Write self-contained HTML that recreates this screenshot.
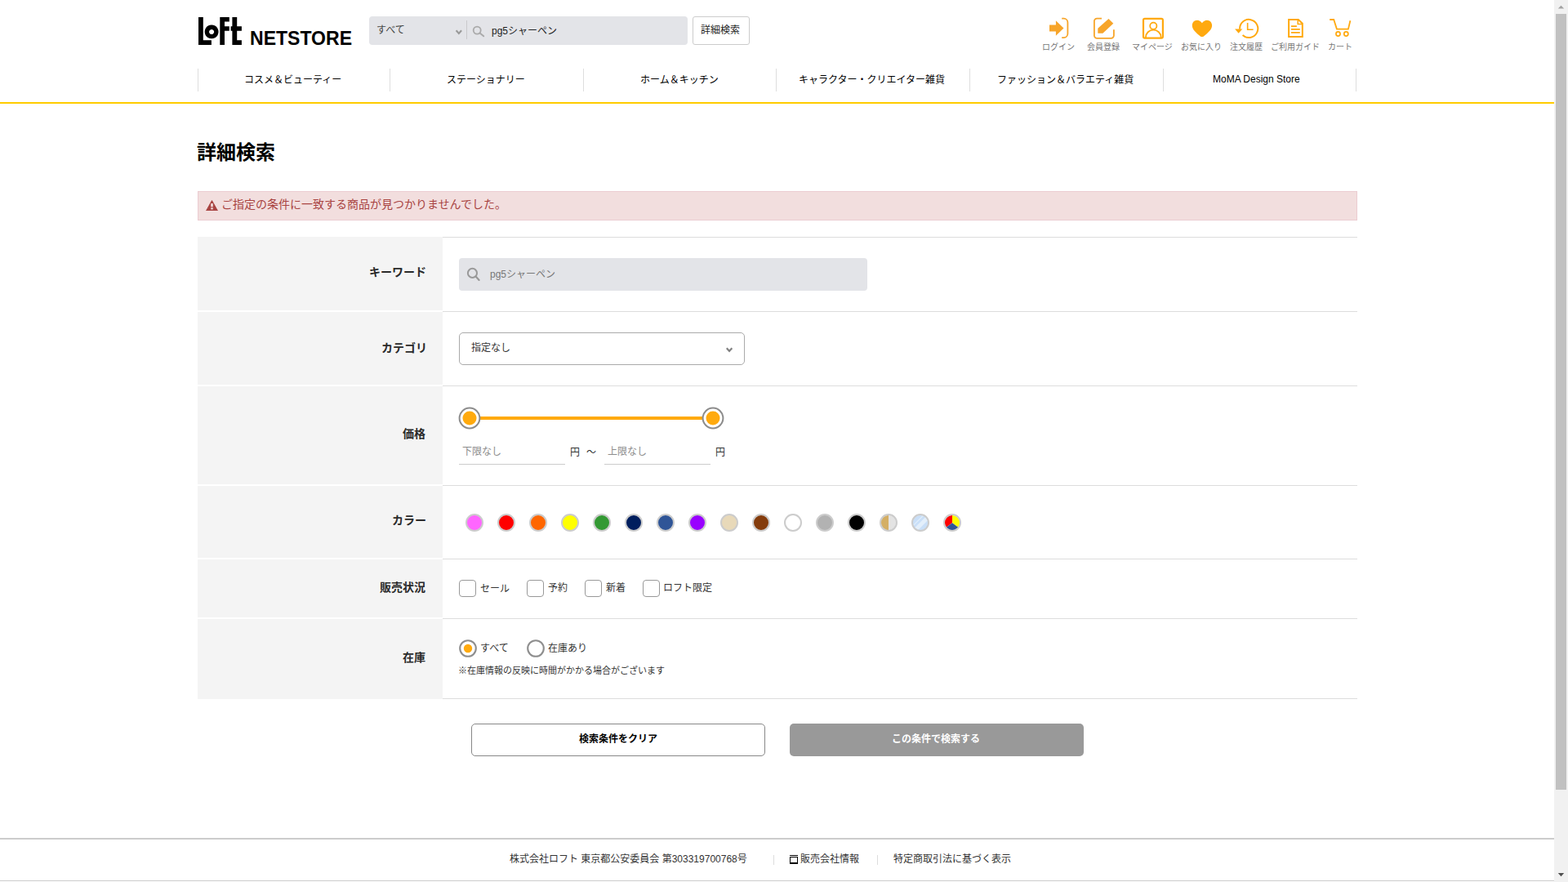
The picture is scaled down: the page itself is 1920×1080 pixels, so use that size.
<!DOCTYPE html>
<html lang="ja">
<head>
<meta charset="utf-8">
<title>詳細検索 | ロフト公式通販 LOFT NETSTORE</title>
<meta name="viewport" content="width=1920">
<style>
html,body{margin:0;padding:0;background:#fff}
body{width:1920px;height:1080px;overflow:hidden;position:relative;font-family:"Liberation Sans","Noto Sans CJK JP",sans-serif;font-size:12px;color:#333}
#page div,#page a,#page .t,#page svg.a,#page input,#page select,#page header,#page nav,#page main,#page footer,#page h1,#page p,#page label,#page button,#page i,#page ul,#page li,#page form,#page section{position:absolute;display:block;box-sizing:border-box;margin:0;padding:0}
#page{position:absolute;left:0;top:0;width:1920px;height:1080px;overflow:hidden}
.t{overflow:hidden;white-space:nowrap;line-height:1;text-decoration:none}
.t .x{position:absolute;left:1px;top:2px;color:inherit;white-space:nowrap;line-height:1.2;letter-spacing:0;font-family:"Liberation Sans","Noto Sans CJK JP",sans-serif}
a{text-decoration:none;color:inherit}
button{border:0;background:none;font:inherit}
</style>
</head>
<body>
<div id="page">
<header style="left:0px;top:0px;width:1903px;height:127px;">
<a style="left:236px;top:14px;width:204px;height:50px" aria-label="LoFt NETSTORE"><svg class="a" style="left:0;top:0" width="204" height="50" viewBox="236 14 204 50" fill="#000"><path d="M243 21H248.8V49.2H258.9V54.9H243Z"/><path fill-rule="evenodd" d="M259.1 30.45a8.45 8.45 0 1 0 0.001 0ZM259.1 35.9a3 3 0 1 1 -0.001 0Z"/><path d="M269.3 21H280.8V26.5H275V32.2H280.8V37.7H275V54.9H269.3Z"/><path d="M284.4 21H290.2V32.2H295.9V37.7H290.2V49.2H295.9V54.9H284.4V37.7H282.6V32.2H284.4Z"/><text x="306" y="54.85" font-size="23" font-weight="bold" fill="#000" textLength="125" lengthAdjust="spacingAndGlyphs" style="font-family:'Liberation Sans',sans-serif">NETSTORE</text></svg></a>
<form role="search" style="left:452px;top:20px;width:466px;height:35px;">
<div style="left:0px;top:0px;width:390px;height:35px;background:#e3e4e8;border-radius:4px"></div>
<div style="left:119px;top:5px;width:1px;height:23px;background:#c9c9cc"></div>
<span class="t" style="left:8px;top:8px;width:40px;height:17px;font-size:12px;color:#444"><span class="x">すべて</span></span>
<svg class="a" style="left:104px;top:14px" width="12" height="10" viewBox="0 0 12 10" ><path d="M2.6 3.3 L5.85 6.9 L9.1 3.3" fill="none" stroke="#999" stroke-width="2.1"/></svg>
<svg class="a" style="left:125px;top:10px" width="18" height="17" viewBox="0 0 18 17" ><circle cx="7.2" cy="7.1" r="4.5" fill="none" stroke="#aaa" stroke-width="1.8"/><path d="M10.6 10.5 L15.2 14.3" stroke="#aaa" stroke-width="2" stroke-linecap="round"/></svg>
<span class="t" style="left:149px;top:9px;width:86px;height:17px;font-size:12px;color:#222"><span class="x">pg5シャーペン</span></span>
<a style="left:396px;top:0px;width:70px;height:35px;background:#fff;border:1px solid #ccc;border-radius:3px"></a>
<a class="t" style="left:405px;top:8px;width:52px;height:17px;font-size:12px;color:#222"><span class="x">詳細検索</span></a>
</form>
<div role="navigation" aria-label="user menu" style="left:1270px;top:16px;width:400px;height:52px;">
<svg class="a" style="left:0;top:0" width="400" height="36" viewBox="1270 16 400 36"><path d="M1285 30.5H1292.9V25.3L1302.5 34.45L1292.9 43.7V38.4H1285Z" fill="#f7a52a"/><path d="M1300.2 22.65H1302.6a4.8 4.8 0 0 1 4.8 4.8V41.3a4.8 4.8 0 0 1 -4.8 4.8H1300.2" fill="none" stroke="#f7a52a" stroke-width="1.8"/><path d="M1349 22.65H1343.2a3.3 3.3 0 0 0 -3.3 3.3V43.55a3.3 3.3 0 0 0 3.3 3.3H1360.6a3.3 3.3 0 0 0 3.3 -3.3V36.2" fill="none" stroke="#f7a52a" stroke-width="1.8"/><path d="M1344.3 40.7V34.7L1357.5 23L1363.3 28.7L1350.4 40.7Z" fill="#f7a52a"/><rect x="1400" y="22.9" width="23.9" height="23.7" rx="1.8" fill="none" stroke="#ffa90f" stroke-width="2.2"/><circle cx="1412.3" cy="31.75" r="4.1" fill="none" stroke="#ffa90f" stroke-width="1.8"/><path d="M1403 46.2V45.6a9.3 9 0 0 1 18.6 0V46.2" fill="none" stroke="#ffa90f" stroke-width="1.8"/><path d="M1471.9 28.2C1470.3 26.2 1468.3 24.8 1465.9 24.8C1462.4 24.8 1459.8 27.6 1459.8 31.2C1459.8 36.2 1464.6 40 1469.6 44.2C1470.9 45.4 1472.9 45.4 1474.2 44.2C1479.2 40 1484.1 36.2 1484.1 31.2C1484.1 27.6 1481.4 24.8 1478 24.8C1475.6 24.8 1473.5 26.2 1471.9 28.2Z" fill="#ffa90f"/><path d="M1518.1 35.6A11.1 11.1 0 1 1 1521.6 43.1" fill="none" stroke="#ffa90f" stroke-width="2"/><path d="M1512.1 35.4H1521.3L1516.6 40.8Z" fill="#ffa90f"/><path d="M1527.65 28V36.2H1534.6" fill="none" stroke="#ffa90f" stroke-width="1.6"/><path d="M1578.1 24H1589.8L1594.8 28.8V44.9H1578.1Z" fill="none" stroke="#ffa90f" stroke-width="2" stroke-linejoin="miter"/><path d="M1589.2 24V29.4H1594.8" fill="none" stroke="#ffa90f" stroke-width="1.5"/><path d="M1581 32.1H1587.9M1581 35.9H1591.8M1581 39.9H1591.8" stroke="#ffa90f" stroke-width="1.8"/><path d="M1628.2 24H1633.2L1636.9 35.6H1650.9L1653.4 25.2" fill="none" stroke="#ffa90f" stroke-width="1.8" stroke-linejoin="miter"/><circle cx="1638.5" cy="41.5" r="2.55" fill="none" stroke="#ffa90f" stroke-width="1.7"/><circle cx="1648.3" cy="41.5" r="2.55" fill="none" stroke="#ffa90f" stroke-width="1.7"/></svg>
<a class="t" style="left:5px;top:34px;width:44px;height:15px;font-size:10px;color:#777"><span class="x">ログイン</span></a>
<a class="t" style="left:60px;top:34px;width:44px;height:15px;font-size:10px;color:#777"><span class="x">会員登録</span></a>
<a class="t" style="left:115px;top:34px;width:54px;height:15px;font-size:10px;color:#777"><span class="x">マイページ</span></a>
<a class="t" style="left:175px;top:34px;width:54px;height:15px;font-size:10px;color:#777"><span class="x">お気に入り</span></a>
<a class="t" style="left:235px;top:34px;width:44px;height:15px;font-size:10px;color:#777"><span class="x">注文履歴</span></a>
<a class="t" style="left:285px;top:34px;width:64px;height:15px;font-size:10px;color:#777"><span class="x">ご利用ガイド</span></a>
<a class="t" style="left:355px;top:34px;width:34px;height:15px;font-size:10px;color:#777"><span class="x">カート</span></a>
</div>
<nav style="left:0px;top:84px;width:1903px;height:43px;">
<div style="left:242px;top:0px;width:1px;height:28px;background:#dedede"></div>
<div style="left:477px;top:0px;width:1px;height:28px;background:#dedede"></div>
<div style="left:714px;top:0px;width:1px;height:28px;background:#dedede"></div>
<div style="left:950px;top:0px;width:1px;height:28px;background:#dedede"></div>
<div style="left:1187px;top:0px;width:1px;height:28px;background:#dedede"></div>
<div style="left:1424px;top:0px;width:1px;height:28px;background:#dedede"></div>
<div style="left:1660px;top:0px;width:1px;height:28px;background:#dedede"></div>
<a class="t" style="left:298px;top:5px;width:124px;height:17px;font-size:12px;color:#000"><span class="x">コスメ＆ビューティー</span></a>
<a class="t" style="left:546px;top:5px;width:100px;height:17px;font-size:12px;color:#000"><span class="x">ステーショナリー</span></a>
<a class="t" style="left:783px;top:5px;width:100px;height:17px;font-size:12px;color:#000"><span class="x">ホーム＆キッチン</span></a>
<a class="t" style="left:977px;top:5px;width:184px;height:17px;font-size:12px;color:#000"><span class="x">キャラクター・クリエイター雑貨</span></a>
<a class="t" style="left:1220px;top:5px;width:172px;height:17px;font-size:12px;color:#000"><span class="x">ファッション＆バラエティ雑貨</span></a>
<a class="t" style="left:1484px;top:4px;width:118px;height:17px;font-size:12px;color:#000"><span class="x">MoMA Design Store</span></a>
<div style="left:0px;top:41px;width:1903px;height:2px;background:#fc0"></div>
</nav>
</header>
<main style="left:0px;top:127px;width:1903px;height:899px;">
<h1 class="t" style="left:240px;top:44px;width:100px;height:34px;font-size:24px;font-weight:bold;color:#000"><span class="x">詳細検索</span></h1>
<div role="alert" style="left:242px;top:107px;width:1420px;height:36px;background:#f2dede;border:1px solid #ebccd1">
<svg class="a" style="left:9px;top:9.6px" width="15" height="13.5" viewBox="0 0 15 13.5" ><path d="M7.5 0.6 L14.4 12.9 H0.6 Z" fill="#a94442" stroke="#a94442" stroke-width="1" stroke-linejoin="round"/><rect x="6.2" y="4.1" width="2.6" height="4.2" fill="#f2dede"/><rect x="6.2" y="9.4" width="2.6" height="2" fill="#f2dede"/></svg>
<p class="t" style="left:27px;top:5px;width:354px;height:20px;font-size:14px;color:#a94442"><span class="x">ご指定の条件に一致する商品が見つかりませんでした。</span></p>
</div>
<form style="left:242px;top:163px;width:1420px;height:566px;">
<div style="left:0px;top:0px;width:300px;height:90px;background:#f4f4f4"></div>
<label class="t" style="left:209px;top:33px;width:74px;height:20px;font-size:14px;font-weight:bold;color:#2a2a2a"><span class="x">キーワード</span></label>
<div style="left:300px;top:0px;width:1120px;height:1px;background:#ddd"></div>
<div style="left:320px;top:26px;width:500px;height:40px;background:#e3e4e8;border-radius:4px"></div>
<svg class="a" style="left:329px;top:37px" width="18" height="18" viewBox="0 0 18 18" ><circle cx="7.45" cy="7.4" r="5.55" fill="none" stroke="#999" stroke-width="2"/><path d="M11.6 11.5 L15.6 15.9" stroke="#999" stroke-width="2.2" stroke-linecap="round"/></svg>
<span class="t" style="left:357px;top:37px;width:86px;height:17px;font-size:12px;color:#777"><span class="x">pg5シャーペン</span></span>
<div style="left:0px;top:92px;width:300px;height:89px;background:#f4f4f4"></div>
<label class="t" style="left:224px;top:126px;width:60px;height:20px;font-size:14px;font-weight:bold;color:#2a2a2a"><span class="x">カテゴリ</span></label>
<div style="left:300px;top:91px;width:1120px;height:1px;background:#ddd"></div>
<div style="left:320px;top:117px;width:350px;height:40px;background:#fff;border:1px solid #aaa;border-radius:5px"></div>
<span class="t" style="left:334px;top:127px;width:52px;height:17px;font-size:12px;color:#333"><span class="x">指定なし</span></span>
<svg class="a" style="left:646px;top:133px" width="10" height="10" viewBox="0 0 10 10" ><path d="M1.8 3.2 L5.05 6.9 L8.3 3.2" fill="none" stroke="#808080" stroke-width="2.2"/></svg>
<div style="left:0px;top:183px;width:300px;height:120px;background:#f4f4f4"></div>
<label class="t" style="left:250px;top:231px;width:32px;height:20px;font-size:14px;font-weight:bold;color:#2a2a2a"><span class="x">価格</span></label>
<div style="left:300px;top:182px;width:1120px;height:1px;background:#ddd"></div>
<div style="left:333px;top:220px;width:298px;height:4px;background:#ffaa0e"></div>
<svg class="a" style="left:319.4px;top:207.5px" width="28" height="28" viewBox="0 0 28 28" ><circle cx="14" cy="14" r="12.4" fill="#fff" stroke="#8c8c8c" stroke-width="2"/><circle cx="14" cy="14" r="8.5" fill="#ffaa0e"/></svg>
<svg class="a" style="left:617.4px;top:207.5px" width="28" height="28" viewBox="0 0 28 28" ><circle cx="14" cy="14" r="12.4" fill="#fff" stroke="#8c8c8c" stroke-width="2"/><circle cx="14" cy="14" r="8.5" fill="#ffaa0e"/></svg>
<div style="left:320px;top:278px;width:130px;height:1px;background:#ccc"></div>
<div style="left:498px;top:278px;width:130px;height:1px;background:#ccc"></div>
<span class="t" style="left:323px;top:254px;width:52px;height:17px;font-size:12px;color:#8c8c8c"><span class="x">下限なし</span></span>
<span class="t" style="left:455px;top:255px;width:16px;height:17px;font-size:12px;color:#333"><span class="x">円</span></span>
<span class="t" style="left:475px;top:255px;width:16px;height:17px;font-size:12px;color:#333"><span class="x">～</span></span>
<span class="t" style="left:501px;top:254px;width:52px;height:17px;font-size:12px;color:#8c8c8c"><span class="x">上限なし</span></span>
<span class="t" style="left:633px;top:255px;width:16px;height:17px;font-size:12px;color:#333"><span class="x">円</span></span>
<div style="left:0px;top:305px;width:300px;height:88px;background:#f4f4f4"></div>
<label class="t" style="left:237px;top:337px;width:46px;height:20px;font-size:14px;font-weight:bold;color:#2a2a2a"><span class="x">カラー</span></label>
<div style="left:300px;top:304px;width:1120px;height:1px;background:#ddd"></div>
<svg class="a" style="left:328px;top:339px" width="22" height="22" viewBox="0 0 22 22" ><circle cx="11" cy="11" r="10" fill="#ff66ff" stroke="#ccc" stroke-width="2"/></svg>
<svg class="a" style="left:367px;top:339px" width="22" height="22" viewBox="0 0 22 22" ><circle cx="11" cy="11" r="10" fill="#ff0000" stroke="#ccc" stroke-width="2"/></svg>
<svg class="a" style="left:406px;top:339px" width="22" height="22" viewBox="0 0 22 22" ><circle cx="11" cy="11" r="10" fill="#ff6600" stroke="#ccc" stroke-width="2"/></svg>
<svg class="a" style="left:445px;top:339px" width="22" height="22" viewBox="0 0 22 22" ><circle cx="11" cy="11" r="10" fill="#ffff00" stroke="#ccc" stroke-width="2"/></svg>
<svg class="a" style="left:484px;top:339px" width="22" height="22" viewBox="0 0 22 22" ><circle cx="11" cy="11" r="10" fill="#339933" stroke="#ccc" stroke-width="2"/></svg>
<svg class="a" style="left:523px;top:339px" width="22" height="22" viewBox="0 0 22 22" ><circle cx="11" cy="11" r="10" fill="#001e5e" stroke="#ccc" stroke-width="2"/></svg>
<svg class="a" style="left:562px;top:339px" width="22" height="22" viewBox="0 0 22 22" ><circle cx="11" cy="11" r="10" fill="#2f5597" stroke="#ccc" stroke-width="2"/></svg>
<svg class="a" style="left:601px;top:339px" width="22" height="22" viewBox="0 0 22 22" ><circle cx="11" cy="11" r="10" fill="#9900ff" stroke="#ccc" stroke-width="2"/></svg>
<svg class="a" style="left:640px;top:339px" width="22" height="22" viewBox="0 0 22 22" ><circle cx="11" cy="11" r="10" fill="#e8d9b9" stroke="#ccc" stroke-width="2"/></svg>
<svg class="a" style="left:679px;top:339px" width="22" height="22" viewBox="0 0 22 22" ><circle cx="11" cy="11" r="10" fill="#843c0c" stroke="#ccc" stroke-width="2"/></svg>
<svg class="a" style="left:718px;top:339px" width="22" height="22" viewBox="0 0 22 22" ><circle cx="11" cy="11" r="10" fill="#ffffff" stroke="#ccc" stroke-width="2"/></svg>
<svg class="a" style="left:757px;top:339px" width="22" height="22" viewBox="0 0 22 22" ><circle cx="11" cy="11" r="10" fill="#b2b2b2" stroke="#ccc" stroke-width="2"/></svg>
<svg class="a" style="left:796px;top:339px" width="22" height="22" viewBox="0 0 22 22" ><circle cx="11" cy="11" r="10" fill="#000000" stroke="#ccc" stroke-width="2"/></svg>
<svg class="a" style="left:835px;top:339px" width="22" height="22" viewBox="0 0 22 22" ><clipPath id="cg"><circle cx="11" cy="11" r="9.3"/></clipPath><g clip-path="url(#cg)"><rect x="0" y="0" width="11" height="22" fill="#d4af65"/><rect x="11" y="0" width="11" height="22" fill="#e3e3e3"/></g><circle cx="11" cy="11" r="10" fill="none" stroke="#ccc" stroke-width="2"/></svg>
<svg class="a" style="left:874px;top:339px" width="22" height="22" viewBox="0 0 22 22" ><clipPath id="cc"><circle cx="11" cy="11" r="9.3"/></clipPath><g clip-path="url(#cc)"><rect width="22" height="22" fill="#c9dff8"/><path d="M-2.6 27.4 L27.4 -2.6" stroke="#e3effb" stroke-width="4.9"/><path d="M-6.65 23.35 L23.35 -6.65" stroke="#e3effb" stroke-width="1.1"/></g><circle cx="11" cy="11" r="10" fill="none" stroke="#ccc" stroke-width="2"/></svg>
<svg class="a" style="left:913px;top:339px" width="22" height="22" viewBox="0 0 22 22" ><clipPath id="cm"><circle cx="11" cy="11" r="9.3"/></clipPath><g clip-path="url(#cm)"><path d="M11 11.2 L11 -2 L-2 -2 L-2 21 Z" fill="#f00"/><path d="M11 11.2 L11 -2 L24 -2 L24 21 Z" fill="#ff0"/><path d="M11 11.2 L-2 21 L-2 24 L24 24 L24 21 Z" fill="#2f5597"/></g><circle cx="11" cy="11" r="10" fill="none" stroke="#ccc" stroke-width="2"/></svg>
<div style="left:0px;top:395px;width:300px;height:71px;background:#f4f4f4"></div>
<label class="t" style="left:222px;top:419px;width:60px;height:20px;font-size:14px;font-weight:bold;color:#2a2a2a"><span class="x">販売状況</span></label>
<div style="left:300px;top:394px;width:1120px;height:1px;background:#ddd"></div>
<div style="left:320px;top:420px;width:21px;height:21px;background:#fff;border:1px solid #999;border-radius:4px"></div>
<label class="t" style="left:345px;top:422px;width:40px;height:17px;font-size:12px;color:#333"><span class="x">セール</span></label>
<div style="left:403px;top:420px;width:21px;height:21px;background:#fff;border:1px solid #999;border-radius:4px"></div>
<label class="t" style="left:428px;top:421px;width:28px;height:17px;font-size:12px;color:#333"><span class="x">予約</span></label>
<div style="left:474px;top:420px;width:21px;height:21px;background:#fff;border:1px solid #999;border-radius:4px"></div>
<label class="t" style="left:499px;top:421px;width:28px;height:17px;font-size:12px;color:#333"><span class="x">新着</span></label>
<div style="left:545px;top:420px;width:21px;height:21px;background:#fff;border:1px solid #999;border-radius:4px"></div>
<label class="t" style="left:569px;top:421px;width:64px;height:17px;font-size:12px;color:#333"><span class="x">ロフト限定</span></label>
<div style="left:0px;top:468px;width:300px;height:97.5px;background:#f4f4f4"></div>
<label class="t" style="left:250px;top:505px;width:32px;height:20px;font-size:14px;font-weight:bold;color:#2a2a2a"><span class="x">在庫</span></label>
<div style="left:300px;top:467px;width:1120px;height:1px;background:#ddd"></div>
<svg class="a" style="left:319px;top:492px" width="24" height="24" viewBox="0 0 24 24" ><circle cx="12" cy="12" r="9.8" fill="#fff" stroke="#8e8e8e" stroke-width="2.1"/><circle cx="12" cy="12" r="5.2" fill="#ffaa0e"/></svg>
<svg class="a" style="left:402px;top:492px" width="24" height="24" viewBox="0 0 24 24" ><circle cx="12" cy="12" r="9.8" fill="#fff" stroke="#8e8e8e" stroke-width="2.1"/></svg>
<label class="t" style="left:345px;top:495px;width:40px;height:17px;font-size:12px;color:#333"><span class="x">すべて</span></label>
<label class="t" style="left:428px;top:495px;width:52px;height:17px;font-size:12px;color:#333"><span class="x">在庫あり</span></label>
<p class="t" style="left:318px;top:523px;width:256px;height:16px;font-size:11px;color:#333"><span class="x">※在庫情報の反映に時間がかかる場合がございます</span></p>
<div style="left:300px;top:565px;width:1120px;height:1px;background:#ddd"></div>
</form>
<button style="left:577px;top:759px;width:360px;height:40px;background:#fff;border:1px solid #888;border-radius:5px"></button>
<span class="t" style="left:708px;top:769px;width:100px;height:17px;font-size:12px;font-weight:bold;color:#000"><span class="x">検索条件をクリア</span></span>
<button style="left:967px;top:759px;width:360px;height:40px;background:#999;border-radius:5px"></button>
<span class="t" style="left:1091px;top:769px;width:112px;height:17px;font-size:12px;font-weight:bold;color:#fff"><span class="x">この条件で検索する</span></span>
</main>
<footer style="left:0px;top:1026px;width:1903px;height:54px;">
<div style="left:0px;top:0px;width:1903px;height:2px;background:#ccc"></div>
<div style="left:0px;top:52px;width:1903px;height:1px;background:#ccc"></div>
<p class="t" style="left:623px;top:17px;width:304px;height:17px;font-size:12px;color:#333"><span class="x">株式会社ロフト 東京都公安委員会 第303319700768号</span></p>
<div style="left:946.5px;top:20.5px;width:1px;height:12px;background:#ddd"></div>
<div style="left:967px;top:21px;width:10px;height:1px;background:#000"></div>
<div style="left:967px;top:23px;width:10px;height:9px;border:1px solid #000;border-bottom-width:2px;background:#fff"></div>
<a class="t" style="left:979px;top:17px;width:76px;height:17px;font-size:12px;color:#333"><span class="x">販売会社情報</span></a>
<div style="left:1073.5px;top:20.5px;width:1px;height:12px;background:#ddd"></div>
<a class="t" style="left:1093px;top:17px;width:148px;height:17px;font-size:12px;color:#333"><span class="x">特定商取引法に基づく表示</span></a>
</footer>
<div aria-hidden="true" style="left:1903px;top:0px;width:17px;height:1080px;background:#f1f1f1">
<div style="left:2px;top:17px;width:13px;height:950px;background:#c1c1c1"></div>
<svg class="a" style="left:0px;top:0px" width="17" height="17" viewBox="0 0 17 17" ><path d="M8.5 6.8 L12.2 10.6 H4.8 Z" fill="#a3a3a3"/></svg>
<svg class="a" style="left:0px;top:1063px" width="17" height="17" viewBox="0 0 17 17" ><path d="M8.5 10.2 L12.2 6.1 H4.8 Z" fill="#505050"/></svg>
</div>
</div>
</body>
</html>
